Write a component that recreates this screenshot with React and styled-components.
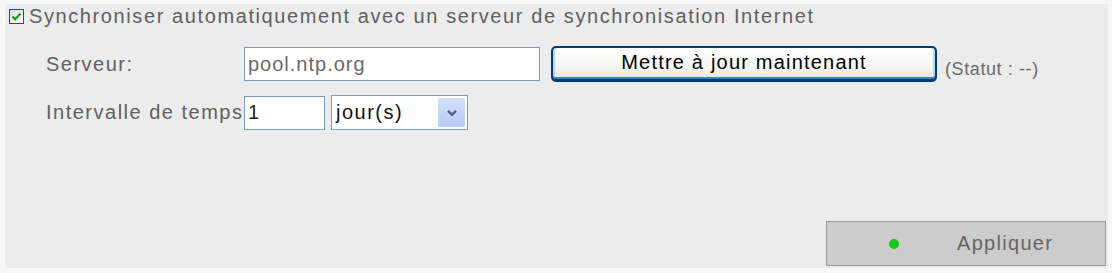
import React from "react";
import styled, { createGlobalStyle } from "styled-components";

const GlobalStyle = createGlobalStyle`
  body {
    margin: 0;
    background: #f6f6f6;
    font-family: "Liberation Sans", Arial, sans-serif;
  }
`;

function App() {
  return (
    <>
      <GlobalStyle />
      <Panel>
        <CheckRow>
          <CheckBox>
            <svg width="11" height="11" viewBox="0 0 11 11">
              <path d="M1.5 5.5 L4.2 8.2 L9.5 2.5" fill="none" stroke="#22a022" strokeWidth="2.4" />
            </svg>
          </CheckBox>
          <Label>Synchroniser automatiquement avec un serveur de synchronisation Internet</Label>
        </CheckRow>

        <Row>
          <FieldLabel>Serveur:</FieldLabel>
          <TextBox width={296} muted>pool.ntp.org</TextBox>
          <XpButton>Mettre à jour maintenant</XpButton>
          <Status>(Statut : --)</Status>
        </Row>

        <Row tight>
          <FieldLabel>Intervalle de temps</FieldLabel>
          <TextBox width={81}>1</TextBox>
          <Select>
            <span>jour(s)</span>
            <ArrowBox>
              <svg width="12" height="8" viewBox="0 0 12 8">
                <path d="M2 1.8 L6 5.8 L10 1.8" fill="none" stroke="#4d6185" strokeWidth="2.4" />
              </svg>
            </ArrowBox>
          </Select>
        </Row>

        <Footer>
          <ApplyButton>
            <Dot />
            <span>Appliquer</span>
          </ApplyButton>
        </Footer>
      </Panel>
    </>
  );
}

const Panel = styled.div`
  margin: 4px 4px 0 4px;
  height: 264px;
  box-sizing: border-box;
  background: #ececec;
  border-left: 1px solid #fbfbfb;
  padding: 5px 2px 2px 4px;
  display: flex;
  flex-direction: column;
  font-size: 20px;
  letter-spacing: 1.5px;
`;

const CheckRow = styled.div`
  display: flex;
  align-items: center;
  height: 15px;
`;

const CheckBox = styled.div`
  width: 13px;
  height: 13px;
  border: 1px solid #1c5180;
  background: linear-gradient(135deg, #dcdcd7, #ffffff);
  display: flex;
  align-items: center;
  justify-content: center;
  flex-shrink: 0;
`;

const Label = styled.span`
  margin-left: 5px;
  color: #606060;
  white-space: nowrap;
  letter-spacing: 1.6px;
`;

const Row = styled.div`
  display: flex;
  align-items: center;
  margin-top: ${(p) => (p.tight ? "13px" : "22px")};
  padding-left: 37px;
`;

const FieldLabel = styled.span`
  width: 198px;
  flex-shrink: 0;
  color: #606060;
  white-space: nowrap;
`;

const TextBox = styled.div`
  width: ${(p) => p.width}px;
  height: 34px;
  box-sizing: border-box;
  border: 1px solid #7f9db9;
  background: #ffffff;
  color: ${(p) => (p.muted ? "#6a6a6a" : "#222222")};
  padding: 0 3px;
  display: flex;
  align-items: center;
  letter-spacing: 1px;
`;

const XpButton = styled.div`
  width: 386px;
  height: 36px;
  box-sizing: border-box;
  margin-left: 11px;
  border: 2px solid #003c74;
  border-bottom-width: 3px;
  border-radius: 5px;
  background: linear-gradient(#ffffff 0%, #f6f6f3 60%, #e6e5dd 100%);
  box-shadow: inset 0 -2px 0 #3c7fb1, inset 2px 0 0 #bcd4f6, inset -2px 0 0 #bcd4f6;
  color: #000000;
  display: flex;
  align-items: center;
  justify-content: center;
  padding-bottom: 3px;
  letter-spacing: 1.2px;
`;

const Status = styled.span`
  margin-left: 8px;
  margin-top: 10px;
  font-size: 18px;
  letter-spacing: 0.6px;
  color: #6a6a6a;
`;

const Select = styled.div`
  width: 137px;
  height: 35px;
  box-sizing: border-box;
  margin-left: 6px;
  border: 1px solid #7f9db9;
  background: #ffffff;
  color: #111111;
  display: flex;
  align-items: center;
  justify-content: space-between;
  padding: 2px 2px 2px 4px;
`;

const ArrowBox = styled.div`
  width: 27px;
  height: 29px;
  background: linear-gradient(#d3e0fc, #b6cbf7);
  border-radius: 2px;
  display: flex;
  align-items: center;
  justify-content: center;
`;

const Footer = styled.div`
  margin-top: auto;
  display: flex;
  justify-content: flex-end;
`;

const ApplyButton = styled.div`
  width: 280px;
  height: 45px;
  box-sizing: border-box;
  background: #cccccc;
  border: 1px solid #9a9a9a;
  display: flex;
  align-items: center;
  color: #666666;
  padding-left: 62px;
  letter-spacing: 1.3px;
`;

const Dot = styled.span`
  width: 10px;
  height: 10px;
  border-radius: 50%;
  background: #18c818;
  margin-right: 58px;
`;

export default App;
